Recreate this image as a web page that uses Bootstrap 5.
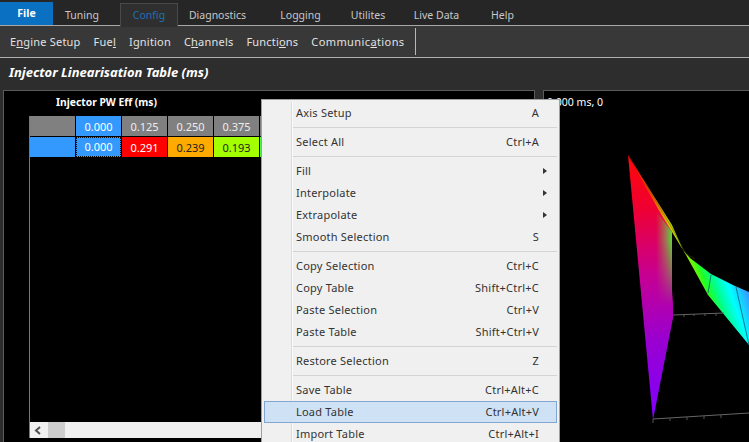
<!DOCTYPE html>
<html lang="en">
<head>
<meta charset="utf-8">
<title>Injector Linearisation Table</title>
<link href="https://cdn.jsdelivr.net/npm/bootstrap@5.3.0/dist/css/bootstrap.min.css" rel="stylesheet">
<style>
html,body{height:442px;overflow:hidden;background:#2d2d2d}
body{font-family:"Noto Sans","Liberation Sans",sans-serif;font-size:11px;line-height:1;color:#ddd;position:relative}
.tabrow{height:26px;background:#262626;border-bottom:1px solid #a8a8a8;font-size:10.5px}
.tabit{height:25px;display:flex;align-items:center;justify-content:center;color:#c8c8c8;padding-top:5px}
.tf{width:53px;margin-top:2px;height:23px;background:#0a70c2;color:#fff;font-weight:700;padding-top:0}
.tt{width:57px;margin-right:10px;padding-left:1px}
.tc{width:58px;margin-top:3px;background:#2f2f2f;border:1px solid #4a4a4a;border-bottom:1px solid #2f2f2f;color:#1f6fb5;height:24px;padding-top:1px}
.td{width:79px}.tl{width:87px}.tu{width:48px}.tv{width:89px}.th{width:43px}
.toolrow{height:32px;background:#383838;border-bottom:1px solid #b0b0b0;padding-left:10px;color:#e2e2e2;letter-spacing:.2px}
.toolit{margin-right:13px;white-space:nowrap}
.toolit.wide{letter-spacing:.4px}
.toolsep{width:1px;height:27px;background:#b8b8b8;margin-left:-3px}
.titleband{height:32px;padding:0 0 3px 9px;color:#fff;font-size:13px;font-weight:700;font-style:italic;background:#2d2d2d}
.work{height:352px;padding-left:3px}
.leftp{width:532px;background:#000;border:1px solid #5a5a5a;border-bottom:0;padding:0 0 0 25px}
.rightp{width:206px;margin-left:8px;background:#000;border:1px solid #5a5a5a;border-right:0;border-bottom:0;position:relative;color:#fff;padding:5px 0 0 3px}
.tblhead{height:25px;padding:6px 0 0 27px;color:#fff;font-weight:700;font-size:10.3px}
.gridwrap{height:322px;border-left:1px solid #777;overflow:hidden;background:#000}
.gr{display:flex;height:20px;margin-bottom:1px}
.gc{width:46px;flex:none;display:flex;align-items:center;justify-content:center;color:#fff;font-size:11px;border-right:1px solid #000}
.cg{background:#808080;color:#eee}.cb{background:#3399ff;color:#fff}
.cr{background:#ff0000}.co{background:#ffaa00;color:#222}.cl{background:#a4ff00;color:#222}.cn{background:#55ee55}
.csel{outline:1px dotted #111;outline-offset:-1px;border-right:0;width:45px;margin-right:1px;border-bottom:1px solid #888}
.gspace{height:264px}
.sbar{height:17px;background:#f0f0f0;display:flex;align-items:center;padding-left:4px;border-bottom:1px solid #777}
.sthumb{width:17px;height:17px;background:#cdcdcd;margin-left:6px}
.ctxmenu{position:absolute;left:261px;top:99px;width:299px;height:350px;background:#f0f0f0;border:1px solid #a0a0a0;border-radius:0;padding:2px 0;margin:0;display:block;font-size:11px;color:#333;min-width:0;z-index:5;letter-spacing:.22px}
.ctxmenu::before{content:"";position:absolute;left:29px;top:2px;bottom:0;width:1px;background:#dcdcdc;box-shadow:1px 0 0 #fafafa}
.ctxit{height:22px;padding:0 17px 2px 31px;color:#333;background:transparent;position:relative;margin:0 2px;width:auto;border:1px solid transparent}
.ctxit.hl{background:#cfe2f5;border-color:#82a6d0;z-index:1}
.ctxit:hover{color:#333}
.arrowm{width:0;height:0;border-left:4px solid #333;border-top:3.5px solid transparent;border-bottom:3.5px solid transparent;margin-right:-8px;margin-top:1px}
.ctxsep{height:1px;margin:3px 2px 3px 30px;background:#d4d4d4;border:0;opacity:1}
.plotsvg{position:absolute;left:-544px;top:-91px;width:749px;height:442px;display:block}
.readout{font-size:10.5px}
</style>
</head>
<body>
<div class="tabrow d-flex">
  <div class="tabit tf">File</div>
  <div class="tabit tt">Tuning</div>
  <div class="tabit tc">Config</div>
  <div class="tabit td">Diagnostics</div>
  <div class="tabit tl">Logging</div>
  <div class="tabit tu">Utilites</div>
  <div class="tabit tv">Live Data</div>
  <div class="tabit th">Help</div>
</div>
<div class="toolrow d-flex align-items-center">
  <span class="toolit">E<u>n</u>gine Setup</span>
  <span class="toolit">Fue<u>l</u></span>
  <span class="toolit">I<u>g</u>nition</span>
  <span class="toolit">C<u>h</u>annels</span>
  <span class="toolit">Functi<u>o</u>ns</span>
  <span class="toolit wide">Communic<u>a</u>tions</span>
  <span class="toolsep"></span>
</div>
<div class="titleband d-flex align-items-center">Injector Linearisation Table (ms)</div>
<div class="work d-flex">
  <div class="leftp">
    <div class="tblhead">Injector PW Eff (ms)</div>
    <div class="gridwrap">
      <div class="gr"><div class="gc cg"></div><div class="gc cb">0.000</div><div class="gc cg">0.125</div><div class="gc cg">0.250</div><div class="gc cg">0.375</div><div class="gc cg"></div></div>
      <div class="gr"><div class="gc cb"></div><div class="gc cb csel">0.000</div><div class="gc cr">0.291</div><div class="gc co">0.239</div><div class="gc cl">0.193</div><div class="gc cn"></div></div>
      <div class="gspace"></div>
      <div class="sbar">
        <svg width="8" height="9" viewBox="0 0 8 9"><path d="M6 1 2 4.500 6 8" fill="none" stroke="#505050" stroke-width="2"/></svg>
        <div class="sthumb"></div>
      </div>
    </div>
  </div>
  <div class="rightp">
    <span class="readout">0.000 ms, 0</span>
    <svg class="plotsvg" viewBox="0 0 749 442" aria-hidden="true">
      <defs>
        <linearGradient id="wing" gradientUnits="userSpaceOnUse" x1="628" y1="155" x2="653" y2="420">
          <stop offset="0" stop-color="#ff0808"/><stop offset=".2" stop-color="#f00030"/><stop offset=".45" stop-color="#c80090"/><stop offset=".7" stop-color="#9a00d0"/><stop offset="1" stop-color="#8000ff"/>
        </linearGradient>
        <linearGradient id="wingg" gradientUnits="userSpaceOnUse" x1="656" y1="250" x2="672" y2="250">
          <stop offset="0" stop-color="#a08040" stop-opacity="0"/><stop offset=".6" stop-color="#909050" stop-opacity=".8"/><stop offset="1" stop-color="#50e030" stop-opacity="1"/>
        </linearGradient>
        <linearGradient id="wingf" x1="0" y1="0" x2="0" y2="1">
          <stop offset="0" stop-color="#fff"/><stop offset=".35" stop-color="#fff"/><stop offset="1" stop-color="#000"/>
        </linearGradient>
        <mask id="wmask" maskUnits="userSpaceOnUse" x="650" y="205" width="25" height="100"><rect x="650" y="205" width="25" height="100" fill="url(#wingf)"/></mask>
        <linearGradient id="rib" gradientUnits="userSpaceOnUse" x1="628" y1="155" x2="694" y2="132">
          <stop offset="0" stop-color="#ff0000"/><stop offset=".12" stop-color="#f04000"/><stop offset=".22" stop-color="#d8c000"/><stop offset=".32" stop-color="#90f000"/><stop offset=".44" stop-color="#20ff20"/><stop offset=".57" stop-color="#00ff90"/><stop offset=".74" stop-color="#00ffff"/><stop offset="1" stop-color="#3a90ff"/>
        </linearGradient>
      </defs>
      <polygon points="628,155 672,232 672,290 673,303 673,318 653,420" fill="url(#wing)"/>
      <polygon points="652,205 672,232 672,305 656,305" fill="url(#wingg)" mask="url(#wmask)"/>
      <polygon points="628,155 672,225 683,250 690,258 711,274 735,286 749,292 749,345 708,295 686,255 672,232 662,216 645,186" fill="url(#rib)"/>
      <path d="M645 183 672 228 686 254 695 259" fill="none" stroke="#555500" stroke-opacity=".45" stroke-width="1"/>
      <path d="M711 275 708 293M736 287 749 345" fill="none" stroke="#006070" stroke-opacity=".8" stroke-width="1"/>
      <path d="M653 419 749 413M673 315 724 313" fill="none" stroke="#666" stroke-width="1"/>
      <path d="M653 419v4M670 418v3M687 417v3M704 416v3M721 415v3M684 315v2M694 314v2M705 314v2M716 314v2" fill="none" stroke="#555" stroke-width="1"/>
    </svg>
  </div>
</div>

<div class="dropdown-menu ctxmenu">
  <div class="dropdown-item ctxit d-flex align-items-center justify-content-between"><span>Axis Setup</span><span>A</span></div>
  <hr class="ctxsep">
  <div class="dropdown-item ctxit d-flex align-items-center justify-content-between"><span>Select All</span><span>Ctrl+A</span></div>
  <hr class="ctxsep">
  <div class="dropdown-item ctxit d-flex align-items-center justify-content-between"><span>Fill</span><span class="arrowm"></span></div>
  <div class="dropdown-item ctxit d-flex align-items-center justify-content-between"><span>Interpolate</span><span class="arrowm"></span></div>
  <div class="dropdown-item ctxit d-flex align-items-center justify-content-between"><span>Extrapolate</span><span class="arrowm"></span></div>
  <div class="dropdown-item ctxit d-flex align-items-center justify-content-between"><span>Smooth Selection</span><span>S</span></div>
  <hr class="ctxsep">
  <div class="dropdown-item ctxit d-flex align-items-center justify-content-between"><span>Copy Selection</span><span>Ctrl+C</span></div>
  <div class="dropdown-item ctxit d-flex align-items-center justify-content-between"><span>Copy Table</span><span>Shift+Ctrl+C</span></div>
  <div class="dropdown-item ctxit d-flex align-items-center justify-content-between"><span>Paste Selection</span><span>Ctrl+V</span></div>
  <div class="dropdown-item ctxit d-flex align-items-center justify-content-between"><span>Paste Table</span><span>Shift+Ctrl+V</span></div>
  <hr class="ctxsep">
  <div class="dropdown-item ctxit d-flex align-items-center justify-content-between"><span>Restore Selection</span><span>Z</span></div>
  <hr class="ctxsep">
  <div class="dropdown-item ctxit d-flex align-items-center justify-content-between"><span>Save Table</span><span>Ctrl+Alt+C</span></div>
  <div class="dropdown-item ctxit hl d-flex align-items-center justify-content-between"><span>Load Table</span><span>Ctrl+Alt+V</span></div>
  <div class="dropdown-item ctxit d-flex align-items-center justify-content-between"><span>Import Table</span><span>Ctrl+Alt+I</span></div>
</div>
<script src="https://cdn.jsdelivr.net/npm/bootstrap@5.3.0/dist/js/bootstrap.bundle.min.js"></script>
</body>
</html>
